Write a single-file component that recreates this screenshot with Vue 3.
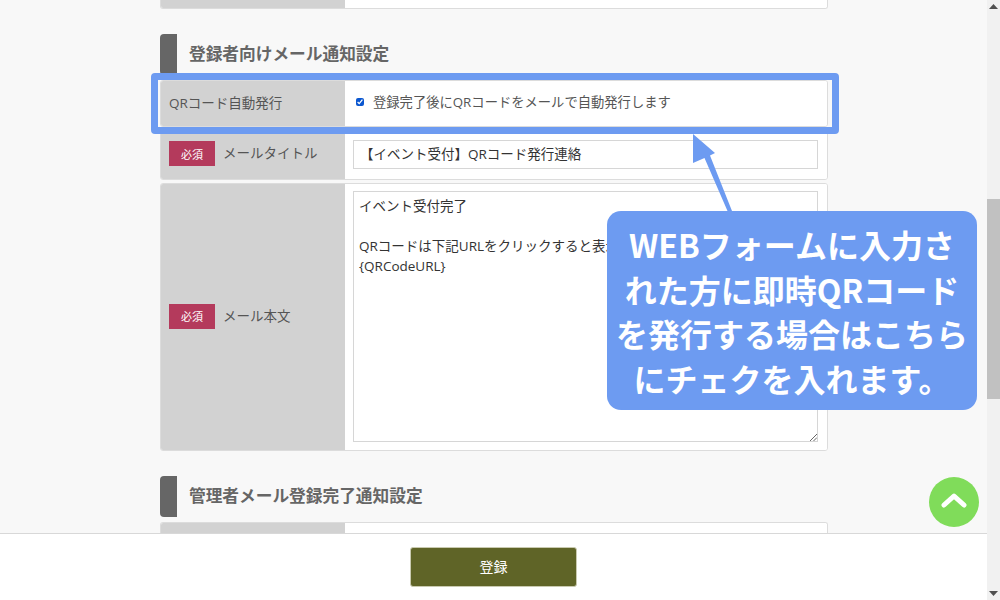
<script setup>
const mailBody = 'イベント受付完了\n\nQRコードは下記URLをクリックすると表示されます。\n{QRCodeURL}'
</script>

<template>
  <div class="page">
    <main class="main">
      <div class="row row-cut-top"><div class="label"></div><div class="value"></div></div>

      <h2 class="heading heading-first"><span class="heading-bar"></span><span class="lift">登録者向けメール通知設定</span></h2>
      <div class="row row-qr">
        <div class="label"><span class="lift">QRコード自動発行</span></div>
        <div class="value value-check">
          <input class="check" type="checkbox" checked />
          <span class="lift">登録完了後にQRコードをメールで自動発行します</span>
        </div>
      </div>
      <div class="row row-title">
        <div class="label"><span class="req">必須</span><span class="lift">メールタイトル</span></div>
        <div class="value value-field value-title"><div class="input">【イベント受付】QRコード発行連絡</div></div>
      </div>
      <div class="row row-body">
        <div class="label"><span class="req req-body">必須</span><span class="lift">メール本文</span></div>
        <div class="value value-field">
          <div class="textarea">
            <pre class="textarea-text">{{ mailBody }}</pre>
            <svg class="grip" width="8" height="8" viewBox="0 0 8 8">
              <path d="M1 8 8 1M4.5 8 8 4.5" stroke="#666" stroke-width="1" fill="none" />
            </svg>
          </div>
        </div>
      </div>

      <h2 class="heading heading-second"><span class="heading-bar"></span><span class="lift">管理者メール登録完了通知設定</span></h2>
      <div class="row row-cut-bottom"><div class="label"></div><div class="value"></div></div>
    </main>

    <footer class="footer"><button class="submit" type="button">登録</button></footer>

    <div class="scrollbar">
      <svg class="arrow-up" width="9" height="5" viewBox="0 0 9 5"><path d="M0 5 4.5 0 9 5Z" fill="#505050" /></svg>
      <div class="thumb"></div>
      <svg class="arrow-down" width="9" height="5" viewBox="0 0 9 5"><path d="M0 0 4.5 5 9 0Z" fill="#505050" /></svg>
    </div>

    <div class="highlight"></div>
    <svg class="pointer" width="50" height="85" viewBox="0 0 50 85">
      <path d="M3 4 25 23 20 25.500 42 81 37.500 81 14.500 28 3 33Z" fill="#6d9bf1" />
    </svg>
    <div class="callout">WEBフォームに入力さ<br />れた方に即時QRコード<br />を発行する場合はこちら<br />にチェクを入れます。</div>
    <button class="to-top" type="button" aria-label="ページトップへ">
      <svg width="26" height="16" viewBox="0 0 26 16">
        <path d="M3 13 13 4 23 13" fill="none" stroke="#fff" stroke-width="5" stroke-linecap="round" stroke-linejoin="round" />
      </svg>
    </button>
  </div>
</template>

<style>
html, body { margin: 0; background: #fff; overflow: hidden; }
</style>

<style scoped>
.page {
  position: relative;
  width: 1000px;
  height: 600px;
  overflow: hidden;
  display: grid;
  grid-template-columns: 987px 13px;
  grid-template-rows: 533px 67px;
  font-family: "Open Sans", "Noto Sans CJK JP", sans-serif;
  font-size: 13px;
  color: #555;
}
.lift { padding-bottom: 4px; }
.main {
  grid-column: 1;
  grid-row: 1;
  background: #f8f8f8;
  padding: 0 159px 0 160px;
  overflow: hidden;
}
.footer {
  grid-column: 1;
  grid-row: 2;
  border-top: 1px solid #d8d8d8;
  background: #fff;
  display: flex;
  justify-content: center;
  align-items: flex-start;
  padding-top: 13px;
  box-sizing: border-box;
}
.submit {
  width: 167px;
  height: 40px;
  padding: 0 0 3px;
  background: #5f6427;
  border: 1px solid #c9cab0;
  border-radius: 3px;
  color: #fff;
  font: inherit;
  font-size: 14px;
}
.row {
  display: grid;
  grid-template-columns: 184px 1fr;
  background: #fff;
  border: 1px solid #dcdcdc;
  border-radius: 3px;
  box-sizing: border-box;
  overflow: hidden;
}
.row-cut-top { height: 9px; border-top: 0; border-radius: 0 0 3px 3px; }
.row-qr { height: 47px; margin-top: 5px; }
.row-title { height: 53px; }
.row-body { height: 268px; margin-top: 3px; }
.row-cut-bottom { height: 12px; margin-top: 5px; border-bottom: 0; border-radius: 3px 3px 0 0; }
.label {
  background: #d2d2d2;
  display: flex;
  align-items: center;
  gap: 8px;
  padding-left: 8px;
  font-size: 13.5px;
}
.value { background: #fff; }
.value-check {
  display: flex;
  align-items: center;
  padding-left: 11px;
  gap: 9px;
  font-size: 13.3px;
}
.check {
  width: 8px;
  height: 8px;
  margin: 0 0 3px;
  accent-color: #0b57d0;
}
.value-field { padding: 7px 9px 0 8px; }
.value-title { padding-top: 12px; }
.req {
  width: 46px;
  height: 25px;
  background: #b43a5c;
  color: #fff;
  font-size: 11px;
  display: flex;
  align-items: center;
  justify-content: center;
}
.req-body { margin-bottom: 2px; }
.input {
  height: 29px;
  border: 1px solid #d6d6d6;
  background: #fff;
  box-sizing: border-box;
  padding: 0 0 4px 6px;
  display: flex;
  align-items: center;
  color: #333;
  font-size: 13.5px;
  white-space: nowrap;
}
.textarea {
  position: relative;
  height: 251px;
  border: 1px solid #d6d6d6;
  box-sizing: border-box;
  padding: 4px 5px;
  color: #333;
}
.textarea-text {
  margin: 0;
  font: inherit;
  font-size: 13.5px;
  line-height: 20px;
}
.grip { position: absolute; right: 0; bottom: 0; }
.heading {
  display: flex;
  align-items: center;
  gap: 12px;
  height: 41px;
  margin: 0;
  font-size: 16.7px;
  font-weight: 700;
  color: #666;
}
.heading-first { margin-top: 25px; }
.heading-second { margin-top: 25px; }
.heading-bar {
  width: 17px;
  height: 100%;
  background: #666;
  border-radius: 4px 0 0 4px;
}
.scrollbar {
  grid-column: 2;
  grid-row: 1 / 3;
  background: #f1f1f1;
  position: relative;
  display: flex;
  flex-direction: column;
  align-items: center;
}
.arrow-up { margin-top: 4px; }
.thumb {
  width: 13px;
  height: 200px;
  margin-top: 190px;
  background: #c1c1c1;
}
.arrow-down { margin-top: auto; margin-bottom: 4px; }
.highlight {
  position: absolute;
  left: 150.500px;
  top: 72.500px;
  width: 688.500px;
  height: 61px;
  box-sizing: border-box;
  border: 7.500px solid #6d9bf1;
  border-radius: 4px;
}
.pointer {
  position: absolute;
  left: 690px;
  top: 130px;
}
.callout {
  position: absolute;
  left: 607px;
  top: 211px;
  width: 370px;
  height: 199px;
  box-sizing: border-box;
  padding-top: 11px;
  background: #6d9bf1;
  border-radius: 14px;
  color: #fff;
  font-family: "Noto Sans CJK JP", sans-serif;
  font-size: 32px;
  font-weight: 700;
  line-height: 44.500px;
  text-align: center;
  white-space: nowrap;
}
.to-top {
  position: absolute;
  left: 929px;
  top: 477px;
  width: 50px;
  height: 50px;
  padding: 0 0 4px;
  border: 0;
  border-radius: 50%;
  background: #80dc5a;
  display: flex;
  align-items: center;
  justify-content: center;
}
</style>
